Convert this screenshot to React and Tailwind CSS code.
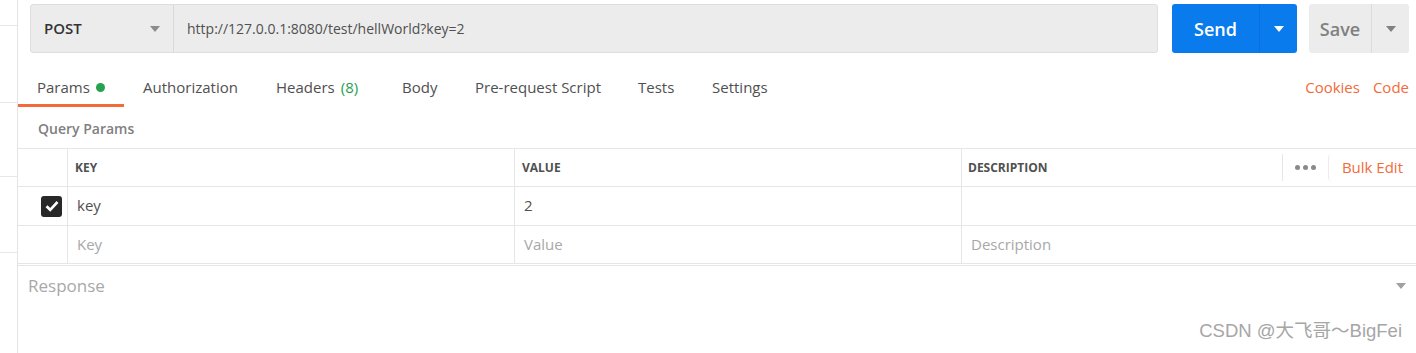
import { useState } from 'react';

const tabs = [
  { label: 'Params', w: 'w-[106px]', dot: true, active: true },
  { label: 'Authorization', w: 'w-[133px]' },
  { label: 'Headers', w: 'w-[126px]', count: '(8)' },
  { label: 'Body', w: 'w-[73px]' },
  { label: 'Pre-request Script', w: 'w-[163px]' },
  { label: 'Tests', w: 'w-[74px]' },
  { label: 'Settings', w: 'w-[95px]' },
];

const Caret = ({ className }) => (
  <svg viewBox="0 0 10 6" className={className}>
    <path d="M0 0h10L5 6z" fill="currentColor" />
  </svg>
);

const App = () => {
  const [checked, setChecked] = useState(true);

  return (
    <div className="flex w-[1416px] h-[353px] overflow-hidden bg-white font-['Open_Sans',sans-serif]">
      {/* left sidebar edge */}
      <aside className="w-[18px] shrink-0 border-r border-[#e4e4e4] flex flex-col">
        <div className="h-[26px] border-b border-[#e8e8e8]" />
        <div className="h-[77px] border-b border-[#e8e8e8]" />
        <div className="h-[74px] border-b border-[#e8e8e8]" />
        <div className="h-[76px] border-b border-[#e8e8e8]" />
      </aside>

      <main className="relative flex-1 flex flex-col min-w-0">
        {/* request bar */}
        <div className="flex items-stretch h-[49px] mt-[4px] pl-[12px] pr-[7px]">
          <div className="flex w-[1128px] rounded-[3px] border border-[#dedede] bg-[#ececec]">
            <div className="w-[143px] flex items-center justify-between pl-[13px] pr-[13px] border-r border-[#dadada]">
              <span className="text-[15px] font-semibold text-[#333]">POST</span>
              <Caret className="w-[10px] h-[6px] text-[#8c8c8c]" />
            </div>
            <div className="flex items-center pl-[13px] text-[14px] text-[#505050]">
              http://127.0.0.1:8080/test/hellWorld?key=2
            </div>
          </div>
          <div className="ml-[14px] flex w-[125px] rounded-[3px] bg-[#097bed] text-white">
            <div className="w-[87px] flex items-center justify-center pt-[1px] text-[18px] font-semibold">Send</div>
            <div className="flex-1 flex items-center justify-center border-l border-[#0a6fd6]">
              <Caret className="w-[10px] h-[6px]" />
            </div>
          </div>
          <div className="ml-[12px] flex w-[100px] rounded-[3px] bg-[#ececec] text-[#808080]">
            <div className="w-[62px] flex items-center justify-center pt-[1px] text-[18px] font-semibold">Save</div>
            <div className="flex-1 flex items-center justify-center border-l border-[#dcdcdc]">
              <Caret className="w-[10px] h-[6px]" />
            </div>
          </div>
        </div>

        {/* tabs */}
        <div className="flex items-start mt-[14px] h-[40px]">
          {tabs.map((t) => (
            <div
              key={t.label}
              className={`${t.w} h-[40px] pl-[19px] pt-[10px] flex items-start gap-[6px] leading-[20px] text-[15px] text-[#505050] ${
                t.active ? 'border-b-[3px] border-[#f26b3a]' : ''
              }`}
            >
              <span>{t.label}</span>
              {t.dot && <span className="mt-[6px] w-[9px] h-[9px] rounded-full bg-[#26a150]" />}
              {t.count && <span className="text-[#26a150]">{t.count}</span>}
            </div>
          ))}
          <div className="ml-auto flex gap-[13px] pt-[10px] pr-[7px] leading-[20px] text-[15px] text-[#f26b3a]">
            <span>Cookies</span>
            <span>Code</span>
          </div>
        </div>

        {/* query params */}
        <div className="h-[41px] flex items-center pt-[1px] pl-[20px] text-[14px] font-semibold text-[#808080]">
          Query Params
        </div>

        <div className="border-t border-[#e6e6e6]">
          {/* header */}
          <div className="flex h-[38px] border-b border-[#e6e6e6] text-[12px] font-bold text-[#505050]">
            <div className="w-[50px] border-r border-[#e6e6e6]" />
            <div className="w-[447px] flex items-center pl-[7px] border-r border-[#e6e6e6]">KEY</div>
            <div className="w-[447px] flex items-center pl-[7px] border-r border-[#e6e6e6]">VALUE</div>
            <div className="flex-1 flex items-center pl-[6px]">
              <span>DESCRIPTION</span>
              <div className="ml-auto flex items-center h-full">
                <div className="h-[27px] border-l border-[#e6e6e6]" />
                <div className="w-[45px] flex items-center justify-center gap-[3px]">
                  <span className="w-[5px] h-[5px] rounded-full bg-[#8a8a8a]" />
                  <span className="w-[5px] h-[5px] rounded-full bg-[#8a8a8a]" />
                  <span className="w-[5px] h-[5px] rounded-full bg-[#8a8a8a]" />
                </div>
                <div className="h-[27px] border-l border-[#ececec] rounded-l-[4px] flex items-center pl-[13px] pr-[13px] text-[15px] font-normal text-[#f26b3a]">
                  Bulk Edit
                </div>
              </div>
            </div>
          </div>

          {/* row 1 */}
          <div className="flex h-[39px] border-b border-[#e6e6e6] text-[15px] text-[#505050]">
            <div className="w-[50px] flex items-center justify-end pr-[5px] border-r border-[#e6e6e6]">
              <button
                type="button"
                onClick={() => setChecked((v) => !v)}
                className={`w-[21px] h-[21px] rounded-[3px] flex items-center justify-center ${
                  checked ? 'bg-[#282828]' : 'border border-[#bbb] bg-white'
                }`}
              >
                {checked && (
                  <svg viewBox="0 0 14 12" className="w-[14px] h-[12px]">
                    <path d="M1.5 6.2 5.2 9.8 12.5 2" fill="none" stroke="white" strokeWidth="2.6" />
                  </svg>
                )}
              </button>
            </div>
            <div className="w-[447px] flex items-center pl-[9px] pb-[1px] border-r border-[#e6e6e6]">key</div>
            <div className="w-[447px] flex items-center pl-[9px] pb-[1px] border-r border-[#e6e6e6]">2</div>
            <div className="flex-1" />
          </div>

          {/* row 2 placeholder */}
          <div className="flex h-[38px] border-b border-[#e6e6e6] text-[15px] text-[#a8a8a8]">
            <div className="w-[50px] border-r border-[#e6e6e6]" />
            <div className="w-[447px] flex items-center pl-[9px] pb-[1px] border-r border-[#e6e6e6]">Key</div>
            <div className="w-[447px] flex items-center pl-[9px] pb-[1px] border-r border-[#e6e6e6]">Value</div>
            <div className="flex-1 flex items-center pl-[9px] pb-[1px]">Description</div>
          </div>
        </div>

        {/* response */}
        <div className="mt-[1px] border-t border-[#e6e6e6] flex items-center justify-between h-[41px] pl-[10px] pr-[10px]">
          <span className="text-[17px] text-[#a8a8a8]">Response</span>
          <Caret className="w-[10px] h-[6px] text-[#a0a0a0]" />
        </div>

        <div className="flex-1 flex items-end justify-end pr-[14px] pb-[8px]">
          <span className="text-[18.5px] text-[#a6a6a6] font-['Liberation_Sans','Noto_Sans_CJK_SC',sans-serif]">
            CSDN @大飞哥～BigFei
          </span>
        </div>
      </main>
    </div>
  );
};

export default App;
